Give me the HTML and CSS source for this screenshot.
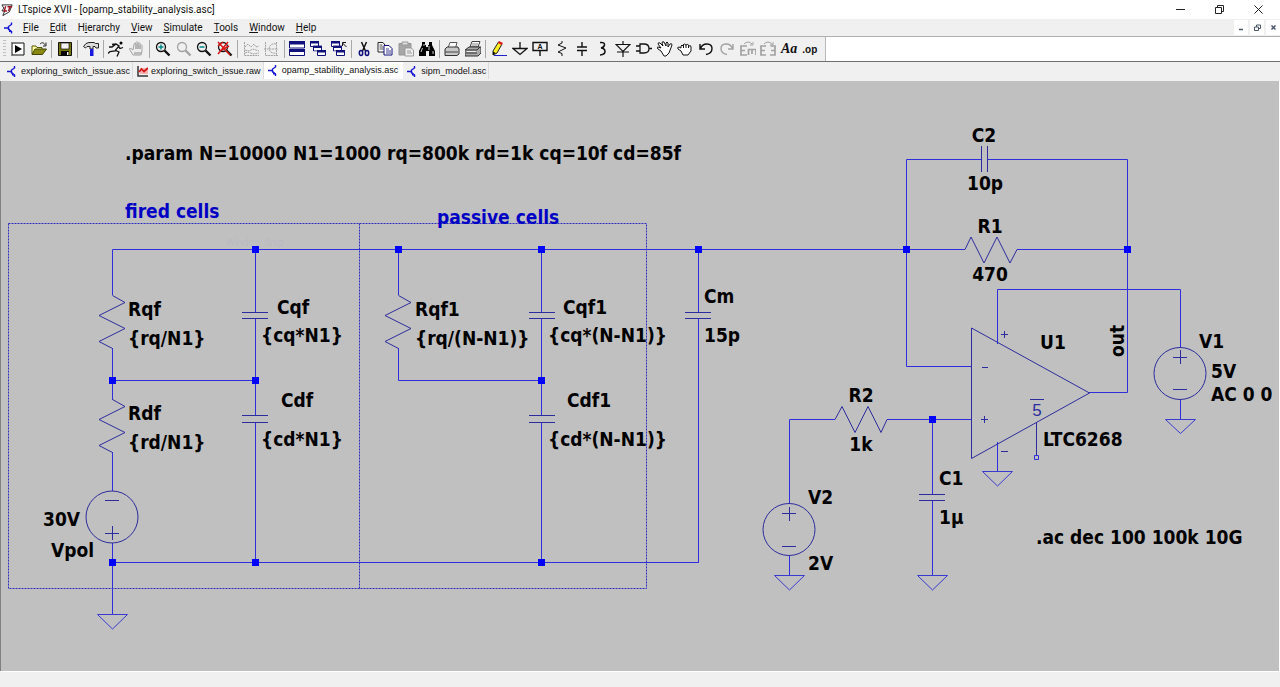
FILE: index.html
```html
<!DOCTYPE html>
<html lang="en">
<head>
<meta charset="utf-8">
<title>LTspice XVII - [opamp_stability_analysis.asc]</title>
<link rel="stylesheet" href="styles.css">
</head>
<body>
<svg class="defs" aria-hidden="true">
  <symbol id="npn" viewBox="0 0 11 11"><path d="M0 5.500h4M7.500 0v2L4.500 4v3l3 2v2" fill="none" stroke="#1414d2" stroke-width="1.400"/><path d="M5 6v3.500h3.500z" fill="#1414d2"/></symbol>
  <symbol id="wave" viewBox="0 0 11 11"><path d="M1 0v10h10" fill="none" stroke="#333" stroke-width="1.500"/><path d="M3 2h8v6H3z" fill="#f6b0b0"/><path d="M2 6 4.500 3 7 5.500 11 2" fill="none" stroke="#d01818" stroke-width="1.700"/></symbol>
  <symbol id="mag" viewBox="0 0 16 16"><circle cx="6" cy="6" r="4.500" fill="none" stroke="currentColor" stroke-width="1.300"/><path d="m9.500 9.500 5 5" stroke="currentColor" stroke-width="2.400"/></symbol>
  <symbol id="win" viewBox="0 0 9 6"><path d="M.5.5h8v5h-8z" fill="#fff" stroke="#10107c"/><path d="M0 0h9v2.500H0z" fill="#10107c"/></symbol>
</svg>
<div class="app">
  <header class="titlebar">
    <svg class="logo" viewBox="0 0 14 14"><path d="M1 1.500h11L9 9 2 13l2-5H1l2-3z" fill="#fff" stroke="#222"/><path d="M5 3 3.500 8h3M7 3.500h5M10 3 8 8" fill="none" stroke="#a01020" stroke-width="1.500"/></svg>
    <h1 class="title">LTspice XVII - [opamp_stability_analysis.asc]</h1>
    <div class="winctl">
      <button aria-label="Minimize"><svg viewBox="0 0 9 9"><path d="M0 4.500h9"/></svg></button>
      <button aria-label="Restore"><svg viewBox="0 0 9 9"><path d="M.5 2.500h6v6h-6zM2.500 2V.5h6v6H7"/></svg></button>
      <button aria-label="Close"><svg viewBox="0 0 9 9"><path d="m.5.5 8 8m0-8-8 8"/></svg></button>
    </div>
  </header>
  <nav class="menubar">
    <svg class="doc"><use href="#npn"/></svg>
    <button><u>F</u>ile</button><button><u>E</u>dit</button><button>H<u>i</u>erarchy</button><button><u>V</u>iew</button><button><u>S</u>imulate</button><button><u>T</u>ools</button><button><u>W</u>indow</button><button><u>H</u>elp</button>
    <div class="mdictl">
      <button aria-label="Minimize document"><svg viewBox="0 0 7 7"><path d="M1 5.500h4" stroke-width="1.500"/></svg></button>
      <button aria-label="Restore document"><svg viewBox="0 0 7 7"><path d="M.5 3h4v3.500h-4zM2.500 3V1h4v3.500h-2"/></svg></button>
      <button aria-label="Close document"><svg viewBox="0 0 7 7"><path d="m1.500 1.500 4 4m0-4-4 4" stroke-width="1.500"/></svg></button>
    </div>
  </nav>
  <div class="toolrow">
    <div class="toolbar" role="toolbar" aria-label="Main">
      <span class="grip"></span>
      <button aria-label="Run script"><svg viewBox="0 0 16 16"><path d="M2 2h12v12H2z" fill="#fff" stroke="#111"/><path d="M1.500 1v14" stroke="#888"/><path d="m5 4 7 4-7 4z"/></svg></button>
      <button aria-label="Open"><svg viewBox="0 0 16 16"><path d="M1 13V5h4l1 1.500h5V8" fill="#ffff9c" stroke="#55550a"/><path d="m1 13.500 3-5.500h11.500l-4 5.500z" fill="#8a8a12" stroke="#44440a"/><path d="M9 3c2-2 4-1.500 5 1m1-2.500V5h-3" fill="none" stroke="#222"/></svg></button>
      <i class="sep"></i>
      <button aria-label="Save"><svg viewBox="0 0 16 16"><path d="M1.500 1.500h13v13h-13z" fill="#77770c" stroke="#111"/><path d="M4 2h8v6H4z" fill="#f3f3f3" stroke="#111" stroke-width=".7"/><path d="M4 10h8v4.500H4z"/><path d="M10 11h1.500v3H10z" fill="#fff"/></svg></button>
      <i class="sep"></i>
      <button aria-label="Control panel"><svg viewBox="0 0 16 16"><path d="M.5 5.500 3 2.500l3-1h5l1.500 1h3v4.500h-2.500l-1-1.500H10V8H7V5.500H4L2.500 7z" fill="#dcdcdc" stroke="#222"/><path d="M7 8h3.500v7H7z" fill="#1818e0"/></svg></button>
      <i class="sep"></i>
      <button aria-label="Run"><svg viewBox="0 0 16 16"><circle cx="13" cy="2" r="1.500"/><path d="M4 3.500 8 3l3 2-4 5-5 .5L0 12.500M7 9l4 2-2 4.500M10 5l2 2.500 3-1M1 6h3l4-3" fill="none" stroke="#111" stroke-width="1.300"/></svg></button>
      <button aria-label="Halt" disabled><svg viewBox="0 0 16 16"><path d="M4 9 2 7.500C0 7 0 8 1 9l3 5h8l1-4V4.500q-1-2-2 0V8 2.500q-1-2-2 0V8 1.500q-1-2-2 0V8 3q-1.500-1.500-2 0z" fill="#eee" stroke="#a2a2a2"/><path d="M5 11h7v3H5z" fill="#bbb"/></svg></button>
      <i class="sep"></i>
      <button aria-label="Zoom in"><svg viewBox="0 0 16 16"><use href="#mag"/><path d="M3.500 6h5M6 3.500v5" stroke="#088" stroke-width="1.500"/></svg></button>
      <button aria-label="Pan" disabled><svg viewBox="0 0 16 16"><use href="#mag"/></svg></button>
      <button aria-label="Zoom out"><svg viewBox="0 0 16 16"><use href="#mag"/><path d="M3.500 6h5" stroke="#088" stroke-width="1.500"/></svg></button>
      <button aria-label="Zoom full"><svg viewBox="0 0 16 16"><use href="#mag"/><path d="m1 1 12 13M11 1 1 13M1 5l5-4M3 10l9-5" stroke="#d81818" stroke-width="1.500"/></svg></button>
      <i class="sep"></i>
      <button aria-label="Autorange" disabled><svg class="line" viewBox="0 0 16 16"><path d="M1.500 1v13.500H16M2 6l3-3 3 3 3-3 2 3 3-1M2 9l4 1 4-2 6 2M2 12l3-1 5 2 6-1" stroke-dasharray="2 .7"/></svg></button>
      <button aria-label="Plot settings" disabled><svg class="line" viewBox="0 0 16 16"><path d="M2.500 1v13.500H15M1 8h14M13.500 1v14M13 3C4 1 4 14 13 12" stroke-dasharray="2 .7"/></svg></button>
      <i class="sep"></i>
      <button aria-label="Tile windows"><svg viewBox="0 0 16 16"><path d="M.5 1h15v6H.5zM.5 8.500h15v6H.5z" fill="#fff" stroke="#10107c"/><path d="M0 0h16v3.500H0zM0 8h16v3H0z" fill="#10107c"/></svg></button>
      <button aria-label="Cascade windows"><svg viewBox="0 0 16 16"><use href="#win" width="9" height="6"/><use href="#win" x="3" y="4.500" width="9" height="6"/><use href="#win" x="7" y="9" width="9" height="6"/></svg></button>
      <button aria-label="Close windows"><svg viewBox="0 0 16 16"><use href="#win" width="9" height="6"/><use href="#win" x="2" y="4.500" width="9" height="6"/><use href="#win" x="5" y="9" width="9" height="6"/><path d="m15.500 6-4-4m0 3V1.500H15" fill="none" stroke="#111"/></svg></button>
      <i class="sep"></i>
      <button aria-label="Cut"><svg viewBox="0 0 16 16"><path d="m5.500 1 4 9M10.500 1l-4 9" fill="none" stroke="#111" stroke-width="1.500"/><ellipse cx="5" cy="12" rx="1.700" ry="2.500" fill="none" stroke="#10107c" stroke-width="1.500"/><ellipse cx="11" cy="12" rx="1.700" ry="2.500" fill="none" stroke="#10107c" stroke-width="1.500"/></svg></button>
      <button aria-label="Copy"><svg viewBox="0 0 16 16"><path d="M1 1.500h5L8 4v7H1z" fill="#fff" stroke="#222"/><path d="M2.500 4h3m-3 2h4m-4 2h4" stroke="#222" stroke-width=".8"/><path d="M7 4.500h5l3 3V14H7z" fill="#fff" stroke="#10107c"/><path d="M9 8h3m-3 2h5m-5 2h5" stroke="#10107c" stroke-width=".8"/></svg></button>
      <button aria-label="Paste" disabled><svg viewBox="0 0 16 16"><path d="M1 2.500h12V14H1z" fill="#a6a6a6" stroke="#969696"/><path d="M4 1h6v3H4z" fill="#ddd" stroke="#999"/><path d="M7 7h6l2.500 2v6H7z" fill="#f0f0f0" stroke="#999"/><path d="M9 10h4m-4 2h5" stroke="#999"/></svg></button>
      <button aria-label="Find"><svg viewBox="0 0 16 16"><path d="M3 1h3v3h1v2h2V4h1V1h3v3l3 6v5h-6v-5H7v5H0v-5l3-6z"/><path d="M3.500 7 2 11m8-6v4m4 1v3M5 3v2" stroke="#fff" stroke-width=".8"/></svg></button>
      <i class="sep"></i>
      <button aria-label="Print setup"><svg viewBox="0 0 16 16"><path d="M4 7 6 1.500h7L11.500 7z" fill="#fff" stroke="#555"/><path d="m1 8 2-2h11l1 2v5l-2 1.500H1z" fill="#c7c7c7" stroke="#333"/><path d="M1 11h13" stroke="#444"/></svg></button>
      <button aria-label="Print"><svg viewBox="0 0 16 16"><path d="M5 6 7 .5h8L13 6z" fill="#fff" stroke="#444"/><path d="M7 3h6M6.500 5h6" stroke="#555" stroke-width=".7"/><path d="m0 9 4-3h12v6l-3 3H0z" fill="#aaa" stroke="#333"/><path d="M1 9h11l3-3M1 12h11" fill="none" stroke="#333"/><path d="M2 10h9v1H2z" fill="#eee"/></svg></button>
      <i class="sep"></i>
      <button aria-label="Wire"><svg viewBox="0 0 16 16"><path d="M2 10 7.500 1l3.500 2L6 12l-4 2z" fill="#ffef25" stroke="#222"/><path d="M7 2 8 0l4 2-1.500 2z" fill="#e01818"/><path d="m2 10.500 2.500 1.500L2 14z"/><path d="M3 14.500h13" stroke="#2020d0"/></svg></button>
      <button aria-label="Ground"><svg class="line" viewBox="0 0 16 16"><path d="M8 1v6M1 7.500h14l-7 6z" stroke-width="1.300"/></svg></button>
      <button aria-label="Label net"><svg class="line" viewBox="0 0 16 16"><path d="M1 1.500h14v8H1zM8 9.500V15" stroke-width="1.400"/><text x="8" y="8" class="tag">A</text></svg></button>
      <button aria-label="Resistor"><svg class="line" viewBox="0 0 16 16"><path d="M9 0v2L5 4l8 3-8 4 4 1.500V15"/></svg></button>
      <button aria-label="Capacitor"><svg class="line" viewBox="0 0 16 16"><path d="M8 1v5M8 10v5M3 6h10M3 9.500h10" stroke-width="1.400"/></svg></button>
      <button aria-label="Inductor"><svg class="line" viewBox="0 0 16 16"><path d="M6 1.500q5-.5 4.500 2.500Q10 6.500 7 7q4 .5 4 3.500T6 14" stroke-width="1.500"/></svg></button>
      <button aria-label="Diode"><svg class="line" viewBox="0 0 16 16"><path d="M8 0v4M8 11v5M1 3.500h14L8 10.500zM2 11h12" stroke-width="1.200"/></svg></button>
      <button aria-label="Component"><svg class="line" viewBox="0 0 16 16"><path d="M4 3h4q5 0 5 4.500T8 12H4zM0 5h4M0 10h4M13 7.500h3" stroke-width="1.300"/></svg></button>
      <button aria-label="Move"><svg class="line" viewBox="0 0 16 16"><path d="m4 10-3-2q-2-2 0-2l3 1-3-4q0-2 2-1l3 3-1-3q0-2 2-1l2 4V2q1-2 2 0v4l2-3q2-1 2 1l-3 8-3 3H7z" fill="#fff"/></svg></button>
      <button aria-label="Drag"><svg class="line" viewBox="0 0 16 16"><path d="M4 10 1 8q-1-2 1-2l2 1V5q1-2 2 0V4q1-2 3 0 2-2 3 1 2-1 2 1v4l-3 4H6z" fill="#fff"/><path d="M6.500 4v3M9 4v3M11.500 5v2"/></svg></button>
      <button aria-label="Undo"><svg class="line" viewBox="0 0 16 16"><path d="M2 3v5h5M2.500 7.500C5 1 14 2 14 7.500c0 4-3 5.500-6 6" stroke-width="1.400"/></svg></button>
      <button aria-label="Redo" disabled><svg class="line" viewBox="0 0 16 16"><path d="M14 3v5H9m4.500-.5C11 1 2 2 2 7.500c0 4 3 5.500 6 6" stroke-width="1.400"/></svg></button>
      <button aria-label="Rotate" disabled><svg class="line" viewBox="0 0 16 16"><path d="M7 5H1v9h6M1 9.500h4M8.500 14V8.500H16V14M12 9v4" stroke-width="1.700"/><path d="M4 3q4-4 8 0m1-2v3h-3"/></svg></button>
      <button aria-label="Mirror" disabled><svg class="line" viewBox="0 0 16 16"><path d="M6 5H1v9h5M1 9.500h4M10.500 5H15v9h-5M15 9.500h-4" stroke-width="1.700"/><path d="M4 3q4-4 8 0m1-2v3h-3"/></svg></button>
      <button class="aa" aria-label="Text">Aa</button>
      <button class="op" aria-label="SPICE directive">.op</button>
    </div>
  </div>
  <div class="tabs" role="tablist">
    <button class="tab" role="tab"><svg><use href="#npn"/></svg>exploring_switch_issue.asc</button>
    <button class="tab" role="tab"><svg><use href="#wave"/></svg>exploring_switch_issue.raw</button>
    <button class="tab active" role="tab" aria-selected="true"><svg><use href="#npn"/></svg>opamp_stability_analysis.asc</button>
    <button class="tab" role="tab"><svg><use href="#npn"/></svg>sipm_model.asc</button>
  </div>
  <main class="canvas">
    <svg class="schematic" viewBox="0 81 1280 590" preserveAspectRatio="xMinYMin meet" role="img" aria-label="Op-amp stability schematic">
      <text class="ghost" x="226" y="246">Window Snip</text>
      <path class="dash" d="M8.500 223.500h638v365h-638zM359.500 223.500v365"/>
      <g class="wire">
        <path d="M112.500 295V249.500H965M1017 249.500h110M112.500 348v52M112.500 452v39M112.500 543v71M112.500 380.500h143M112.500 562.500h586M255.500 249v63M255.500 318v98M255.500 422v140"/>
        <path d="M398.500 249v46M398.500 348v32.500h143M541.500 249v63M541.500 318v98M541.500 422v140M698.500 249v63M698.500 318v245"/>
        <path d="M981 159.500h-74.500v207H971M987 159.500h140.500v233H1089M997.500 344v-54.500h183V348M1180.500 400v19M997.500 442v29M835 419.500h-45.500V504M789.500 556v20M887 419.500h84M932.500 419v76M932.500 501v75M1034.500 455.500h4v4h-4z"/>
      </g>
      <g class="part">
        <path d="M242 312.500h26M242 318.500h26M242 415.500h26M242 422.500h26M529 312.500h26M529 318.500h26M529 415.500h26M529 422.500h26M685 312.500h26M685 318.500h26M919 494.500h26M919 500.500h26M981.500 146v26M987.500 146v26"/>
        <path d="M105 500.500h14M105 533.500h14M112.500 526v14M782 513.500h14M789.500 507v14M782 546.500h14M1173 357.500h14M1180.500 350v14M1173 389.500h14"/>
        <path d="M1001 334.500h7M1004.500 331v7M982 367.500h6M981 419.500h7M984.500 416v7M1001 451.500h7M1036.500 422v33M1030 399.500h14"/>
        <path d="m112.500 295.500 12.500 7-26 13 26 13-26 13 13.500 7M112.500 399.500l12.500 7-26 13 26 13-26 13 13.500 7M398.500 295.500l12.500 7-26 13 26 13-26 13 13.500 7"/>
        <path d="m965 249.500 6-12.500 13 26 13-26 13 26 7-13.500M835 419.500l7-13 13 26 13-26 13 26 6-13"/>
        <circle cx="112" cy="517" r="26"/><circle cx="789" cy="529.500" r="26"/><circle cx="1180" cy="373.500" r="26"/>
        <path d="M971.500 328v130.500l118-65.500z"/>
        <text class="pin" x="1037" y="416">5</text>
      </g>
      <path class="ground" d="M97.500 614.500h30l-15 14.500zM774.500 575.500h30l-15 14.500zM917.500 575.500h30l-15 14.500zM982.500 471.500h30l-15 14.500zM1165.500 419.500h30l-15 14z"/>
      <path class="node" d="M252 246h7v7h-7zM395 246h7v7h-7zM538 246h7v7h-7zM695 246h7v7h-7zM903 246h7v7h-7zM1124 246h7v7h-7zM109 377h7v7h-7zM252 377h7v7h-7zM538 377h7v7h-7zM929 416h7v7h-7zM109 559h7v7h-7zM252 559h7v7h-7zM538 559h7v7h-7z"/>
      <g class="label">
        <text x="125" y="160">.param N=10000 N1=1000 rq=800k rd=1k cq=10f cd=85f</text>
        <text class="note" x="125" y="218">fired cells</text><text class="note" x="437" y="224">passive cells</text>
        <text x="128" y="316">Rqf</text><text x="128" y="345">{rq/N1}</text>
        <text x="277" y="314">Cqf</text><text x="261" y="342">{cq*N1}</text>
        <text x="128" y="420">Rdf</text><text x="128" y="449">{rd/N1}</text>
        <text x="281" y="407">Cdf</text><text x="261" y="446">{cd*N1}</text>
        <text x="43" y="526">30V</text><text x="51" y="557">Vpol</text>
        <text x="415" y="316">Rqf1</text><text x="415" y="345">{rq/(N-N1)}</text>
        <text x="563" y="314">Cqf1</text><text x="548" y="342">{cq*(N-N1)}</text>
        <text x="567" y="407">Cdf1</text><text x="548" y="446">{cd*(N-N1)}</text>
        <text x="704" y="303">Cm</text><text x="704" y="342">15p</text>
        <text class="mid" x="984" y="142">C2</text><text class="mid" x="985" y="190">10p</text>
        <text class="mid" x="990" y="233">R1</text><text class="mid" x="990" y="281">470</text>
        <text class="mid" x="861" y="402">R2</text><text class="mid" x="861" y="451">1k</text>
        <text x="1040" y="349">U1</text><text x="1043" y="446">LTC6268</text>
        <text x="939" y="485">C1</text><text x="939" y="524">1µ</text>
        <text x="808" y="504">V2</text><text x="808" y="570">2V</text>
        <text x="1199" y="348">V1</text><text x="1211" y="378">5V</text><text x="1211" y="401">AC 0 0</text>
        <text transform="translate(1124 357) rotate(-90)">out</text>
        <text x="1036" y="544">.ac dec 100 100k 10G</text>
      </g>
    </svg>
  </main>
  <footer class="status"></footer>
</div>
</body>
</html>
```
FILE: styles.css
```css
* { box-sizing: border-box; }
body { margin: 0; font-family: Roboto, "Noto Sans", sans-serif; font-size: 10px; color: #111; }
button { margin: 0; padding: 0; border: 0; background: none; font: inherit; color: inherit; display: flex; align-items: center; justify-content: center; }
svg { display: block; flex: none; }
.defs { position: absolute; width: 0; height: 0; }
.app { display: grid; grid-template-rows: 19px 18px 24px 20px minmax(0, 1fr) 16px; grid-template-columns: minmax(0, 1fr); height: 100vh; background: #f0f0f0; }

.titlebar { display: flex; align-items: center; gap: 4px; padding: 0 2px 0 1px; background: #fff; }
.logo { width: 13px; height: 14px; }
.title { flex: 1; margin: 0; font-size: 10px; font-weight: 400; white-space: nowrap; }
.winctl { display: flex; }
.winctl button { width: 39px; height: 19px; }
.winctl svg { width: 9px; height: 9px; fill: none; stroke: #222; }

.menubar { display: flex; align-items: center; gap: 11px; padding-left: 4px; border-bottom: 1px solid #b0b0b0; }
.menubar > .doc { width: 11px; height: 12px; margin-right: -3px; }
.menubar button { display: block; }
.menubar u { text-underline-offset: 1px; }
.mdictl { display: flex; gap: 2px; margin-left: auto; }
.mdictl button { display: flex; width: 14px; height: 15px; background: #fff; }
.mdictl svg { width: 7px; height: 7px; fill: none; stroke: #4a5568; }

.toolrow { display: flex; background: #fff; }
.toolbar { display: flex; align-items: center; width: 826px; padding: 0 5px 0 3px; background: #f0f0f0; border-right: 1px solid #b8b8b8; }
.toolbar button { flex: 1 1 0; min-width: 0; height: 22px; color: #111; }
.toolbar button:disabled { color: #a2a2a2; }
.toolbar svg { width: 16px; height: 16px; }
.toolbar .line { fill: none; stroke: currentColor; }
.grip { width: 3px; height: 18px; margin-right: 2px; background: repeating-linear-gradient(#c0c0c0 0 1px, #f0f0f0 1px 3px); }
.sep { width: 1px; height: 18px; margin: 0 2px; background: #a8a8a8; }
.tag { font: bold 7px "Liberation Sans", sans-serif; text-anchor: middle; fill: #111; stroke: none; }
.toolbar .aa { font: italic bold 14px "Liberation Serif", serif; }
.toolbar .op { font: bold 10px "Liberation Sans", sans-serif; }

.tabs { display: flex; align-items: stretch; padding: 0 0 2px 3px; border-top: 1px solid #707070; font: 9px "Liberation Sans", sans-serif; }
.tab { gap: 3px; padding: 1px 2px 0 4px; border-right: 1px solid #dcdcdc; white-space: nowrap; }
.tab svg { width: 11px; height: 11px; }
.tab.active { padding: 0 4px 1px; background: #fff; border-color: #fff; }

.canvas { min-height: 0; background: #c0c0c0; border-right: 1px solid #fff; box-shadow: inset 1px 0 #808080; overflow: hidden; }
.schematic { width: calc(100% + 1px); height: 100%; }
.status { border-top: 1px solid #fff; background: #f0f0f0; }

.wire { fill: none; stroke: #2e2edc; }
.part { fill: none; stroke: #2c2c9e; }
.ground { fill: none; stroke: #3a3ad0; }
.node { fill: #0000ff; }
.dash { fill: none; stroke: #2c2cc0; stroke-dasharray: 2 1; }
.label { font: bold 19px "DejaVu Sans Condensed", "DejaVu Sans", sans-serif; fill: #000; }
.note { fill: #0000c4; }
.mid { text-anchor: middle; }
.pin { font: 17px "Liberation Sans", sans-serif; fill: #2c2c9e; stroke: none; text-anchor: middle; }
.ghost { font-size: 10px; fill: #b9bac0; }
```
